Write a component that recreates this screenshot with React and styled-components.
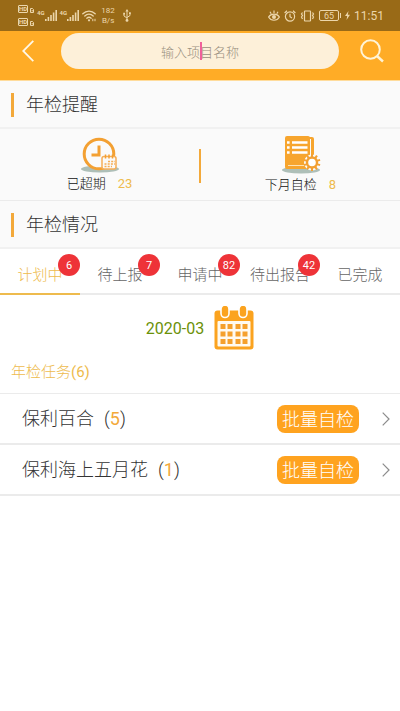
import { useState } from "react";
import styled, { createGlobalStyle, ThemeProvider } from "styled-components";

const theme = {
  colors: {
    primary: "#ffac26",
    button: "#ffa31f",
    accent: "#eebb4d",
    bar: "#f3a93a",
    status: "#996a17",
    statusText: "#ecd6ab",
    searchBg: "#fdf0d9",
    panel: "#fafafa",
    line: "#ebebeb",
    text: "#333333",
    muted: "#666666",
    badge: "#ee3338",
    date: "#6b9108",
  },
};

const GlobalStyle = createGlobalStyle`
  * {
    box-sizing: border-box;
  }
  body {
    margin: 0;
    background: #ffffff;
    font-family: Roboto, "Noto Sans CJK SC", sans-serif;
    font-weight: 300;
  }
  button, input {
    font-family: inherit;
    font-weight: inherit;
  }
  button {
    border: 0;
    padding: 0;
    background: none;
    cursor: pointer;
  }
  svg {
    display: block;
    flex: none;
  }
`;

const StatusBar = styled.div`
  display: flex;
  align-items: center;
  justify-content: space-between;
  height: 31px;
  padding: 0 16px 0 18px;
  background-color: ${({ theme }) => theme.colors.status};
  color: ${({ theme }) => theme.colors.statusText};
  font-weight: 400;
`;

const StatusGroup = styled.div`
  display: flex;
  align-items: center;
  gap: ${({ $gap }) => $gap};
`;

const HdStack = styled.div`
  display: flex;
  flex-direction: column;
  gap: 5px;
`;

const HdRow = styled.div`
  display: flex;
  align-items: flex-end;
  gap: 2px;
`;

const HdLabel = styled.span`
  width: 10px;
  height: 8px;
  border: 1px solid currentColor;
  border-radius: 1px;
  font-size: 6px;
  line-height: 6px;
  font-weight: 700;
  text-align: center;
`;

const Signal = styled.div`
  display: flex;
  align-items: flex-start;
  font-size: 6px;
  line-height: 6px;
  font-weight: 700;
`;

const NetSpeed = styled.div`
  width: 16px;
  margin: 0 4px 0 1px;
  font-size: 8px;
  line-height: 10px;
  text-align: center;
`;

const Battery = styled.div`
  display: flex;
  align-items: center;
  gap: 1px;
`;

const BatteryCell = styled.span`
  width: 20px;
  height: 11px;
  border: 1px solid currentColor;
  border-radius: 2px;
  font-size: 9px;
  line-height: 10px;
  text-align: center;
`;

const BatteryTip = styled.span`
  width: 1px;
  height: 5px;
  background-color: currentColor;
`;

const Clock = styled.span`
  font-size: 12px;
  line-height: 16px;
`;

const Header = styled.header`
  display: flex;
  align-items: flex-start;
  height: 50px;
  padding-top: 2px;
  border-bottom: 1px solid #ffdc9c;
  background-color: ${({ theme }) => theme.colors.primary};
`;

const HeaderButton = styled.button`
  display: flex;
  flex: none;
  align-items: center;
  justify-content: flex-end;
  width: 61px;
  height: 36px;
  padding-right: ${({ $inset }) => $inset};
`;

const SearchBox = styled.div`
  position: relative;
  flex: 1;
  height: 36px;
`;

const SearchInput = styled.input`
  width: 100%;
  height: 100%;
  padding: 2px 0 0;
  border: 0;
  border-radius: 18px;
  outline: none;
  background-color: ${({ theme }) => theme.colors.searchBg};
  font-size: 13px;
  text-align: center;
  &::placeholder {
    color: #988f80;
    opacity: 1;
  }
`;

const Caret = styled.span`
  position: absolute;
  top: 9px;
  left: 50%;
  width: 2px;
  height: 18px;
  background-color: #f0609a;
`;

const SectionTitle = styled.h2`
  display: flex;
  align-items: center;
  gap: 12px;
  height: 48px;
  margin: 0;
  padding: 2px 0 0 11px;
  border-bottom: 2px solid #f1f1f1;
  background-color: ${({ theme }) => theme.colors.panel};
  color: ${({ theme }) => theme.colors.text};
  font-size: 18px;
  line-height: 24px;
  font-weight: 300;
  &::before {
    content: "";
    width: 3px;
    height: 24px;
    background-color: ${({ theme }) => theme.colors.bar};
  }
`;

const Stats = styled.div`
  display: flex;
  align-items: center;
  height: 72px;
  padding-top: 2px;
  border-bottom: 1px solid ${({ theme }) => theme.colors.line};
  background-color: ${({ theme }) => theme.colors.panel};
`;

const Stat = styled.div`
  display: flex;
  flex: 1;
  flex-direction: column;
  align-items: center;
`;

const StatLabel = styled.div`
  display: flex;
  gap: 12px;
  padding-top: 1px;
  color: #111111;
  font-size: 13px;
  line-height: 20px;
`;

const Count = styled.span`
  color: ${({ theme, $strong }) => ($strong ? theme.colors.bar : theme.colors.accent)};
  font-weight: 400;
`;

const StatDivider = styled.span`
  width: 2px;
  height: 34px;
  background-color: ${({ theme }) => theme.colors.bar};
`;

const Tabs = styled.nav`
  display: flex;
`;

const Tab = styled.button`
  position: relative;
  flex: 1;
  height: 46px;
  padding-top: 8px;
  border-bottom: 2px solid
    ${({ theme, $active }) => ($active ? theme.colors.accent : theme.colors.line)};
  color: ${({ theme, $active }) => ($active ? theme.colors.accent : theme.colors.muted)};
  font-size: 15px;
  line-height: 20px;
  white-space: nowrap;
`;

const Badge = styled.span`
  position: absolute;
  top: 5px;
  right: 0;
  width: 22px;
  height: 22px;
  border-radius: 50%;
  background-color: ${({ theme }) => theme.colors.badge};
  color: #ffffff;
  font-size: 11px;
  line-height: 23px;
  font-weight: 400;
`;

const DateButton = styled.button`
  display: flex;
  align-items: center;
  justify-content: center;
  gap: 10px;
  width: 100%;
  height: 66px;
  color: ${({ theme }) => theme.colors.date};
  font-size: 16px;
  font-weight: 400;
`;

const TaskTitle = styled.h3`
  height: 33px;
  margin: 0;
  padding-left: 11px;
  border-bottom: 1px solid ${({ theme }) => theme.colors.line};
  color: ${({ theme }) => theme.colors.accent};
  font-size: 15px;
  line-height: 22px;
  font-weight: 300;
`;

const TaskList = styled.ul`
  margin: 0;
  padding: 0;
  list-style: none;
`;

const TaskRow = styled.li`
  display: flex;
  align-items: center;
  height: 51px;
  padding: 0 10px 0 22px;
  border-bottom: 2px solid ${({ theme }) => theme.colors.line};
`;

const TaskName = styled.span`
  display: flex;
  flex: 1;
  gap: 10px;
  color: ${({ theme }) => theme.colors.text};
  font-size: 18px;
  line-height: 24px;
`;

const BatchButton = styled.button`
  width: 82px;
  height: 28px;
  margin-right: 23px;
  padding-top: 2px;
  border-radius: 8px;
  background-color: ${({ theme }) => theme.colors.button};
  color: #ffffff;
  font-size: 18px;
  line-height: 26px;
`;

const SimIcon = () => (
  <svg width="4" height="5" viewBox="0 0 4 5" fill="none" stroke="currentColor">
    <path d="M.5.5H2.5L3.5 1.5V4.5H.5ZM1.5 2.8H3" />
  </svg>
);

const SignalIcon = () => (
  <svg width="12" height="11" viewBox="0 0 12 11" fill="currentColor">
    <path d="M0 9h1.6v2H0zM2.6 7h1.6v4H2.6zM5.2 5h1.6v6H5.2zM7.8 2.5h1.6V11H7.8zM10.4 0H12v11h-1.6z" />
  </svg>
);

const WifiIcon = () => (
  <svg width="14" height="12" viewBox="0 0 14 12" fill="none" stroke="currentColor" strokeLinecap="round">
    <path d="M.8 3.8C4.3.2 9.700.2 13.2 3.8M2.8 6C5.2 3.6 8.8 3.6 11.2 6M4.8 8.2C6.2 7 7.8 7 9.2 8.2" strokeWidth="1.3" />
    <circle cx="7" cy="10.3" r="1.1" fill="currentColor" stroke="none" />
    <path d="M10.8 9.2v1.6M13 9.2v1.6" />
  </svg>
);

const UsbIcon = () => (
  <svg width="8" height="13" viewBox="0 0 8 13" fill="none" stroke="currentColor">
    <path d="M4 2V11M1 5V7L4 9M7 4.5V6.5L4 8.5" />
    <path d="M4 0L5.6 2.6H2.4ZM.2 3.8h1.8v1.8H.2zM6 3.2h1.8V5H6z" fill="currentColor" stroke="none" />
    <circle cx="4" cy="11.4" r="1.4" fill="currentColor" stroke="none" />
  </svg>
);

const EyeIcon = () => (
  <svg width="12" height="12" viewBox="0 0 12 12" fill="none" stroke="currentColor" strokeWidth="1.2">
    <path d="M.6 7C3 3.2 9 3.2 11.4 7 9 11.3 3 11.3.6 7ZM6 .5V3M2 1.8L3.2 3.7M10 1.8L8.8 3.7" />
    <circle cx="6" cy="7" r="2" fill="currentColor" stroke="none" />
  </svg>
);

const AlarmIcon = () => (
  <svg width="12" height="12" viewBox="0 0 12 12" fill="none" stroke="currentColor" strokeWidth="1.2">
    <circle cx="6" cy="6.500" r="4.6" />
    <path d="M6 3.8V6.7L8 8M.6 3L3 .8M11.4 3L9 .8" />
  </svg>
);

const VibrateIcon = () => (
  <svg width="15" height="12" viewBox="0 0 15 12" fill="none" stroke="currentColor" strokeWidth="1.2">
    <rect x="4.5" y="1" width="6" height="10" rx="0.5" />
    <path d="M2.5 2.5L1.5 4 2.5 5.5 1.5 7 2.5 9M12.5 2.5L13.5 4 12.5 5.5 13.5 7 12.5 9" />
  </svg>
);

const BoltIcon = () => (
  <svg width="5" height="9" viewBox="0 0 5 9" fill="currentColor">
    <path d="M3.5 0L0 5H2.2L1.5 9 5 3.8H2.8Z" />
  </svg>
);

const BackIcon = () => (
  <svg width="12" height="22" viewBox="0 0 12 22" fill="none" stroke="#fff8e8" strokeWidth="1.8">
    <path d="M11.3.8L1.2 11 11.3 21.2" />
  </svg>
);

const SearchIcon = () => (
  <svg width="24" height="24" viewBox="0 0 24 24" fill="none" stroke="#fff3d6" strokeWidth="2">
    <circle cx="10.5" cy="10.5" r="9.3" />
    <path d="M17 17L23 22.5" strokeWidth="2.4" />
  </svg>
);

const OverdueIcon = () => (
  <svg width="40" height="36" viewBox="0 0 40 36">
    <ellipse cx="20" cy="32" rx="19" ry="3.5" fill="#aebfb8" />
    <circle cx="19" cy="17" r="14.8" fill="#fafafa" stroke="#f3a032" strokeWidth="3" />
    <path d="M19 8.5V18H11.5" fill="none" stroke="#f3a032" strokeWidth="3" />
    <rect x="22" y="19.5" width="14" height="12.5" rx="2" fill="#fafafa" stroke="#f6ae58" strokeWidth="1.5" />
    <path d="M25.5 17.500V21.500M29 17.500V21.500M32.500 17.500V21.500" stroke="#f3a032" strokeWidth="1.5" />
    <path d="M28 24.500H35M24.500 27H35M24.500 29.500H32" stroke="#f5ad55" strokeWidth="1.5" strokeDasharray="2 1.2" />
  </svg>
);

const teeth = [0, 36, 72, 108, 144, 180, 216, 252, 288, 324];

const SelfCheckIcon = () => (
  <svg width="40" height="38" viewBox="0 0 40 38">
    <ellipse cx="20" cy="34" rx="19" ry="3.5" fill="#aebfb8" />
    <path d="M26 1H31Q33 1 33 3V33H26Z" fill="#f7a52e" />
    <path d="M29.5 3V33" stroke="#fafafa" />
    <rect x="4" y="0" width="25" height="33" rx="2" fill="#f7a52e" />
    <path d="M11 6.5H26.5M11 11.5H26.5M11 16.5H26.5" stroke="#ffffff" strokeWidth="2.6" />
    <path d="M6 6.5H8.6M6 11.5H8.6M6 16.5H8.6" stroke="#ffffff" strokeWidth="2.6" />
    <path d="M7 29.5H26" stroke="#ffe2b3" />
    <circle cx="31" cy="26.5" r="8" fill="#fafafa" />
    {teeth.map((angle) => (
      <rect key={angle} x="30" y="18" width="2" height="4" fill="#f3a032" transform={`rotate(${angle} 31 26.5)`} />
    ))}
    <circle cx="31" cy="26.5" r="5" fill="#ffffff" stroke="#f3a032" strokeWidth="2.4" />
  </svg>
);

const columns = [6.5, 13.5, 21.5, 28.5];
const rows = [18, 25.5, 33];

const CalendarIcon = () => (
  <svg width="40" height="44" viewBox="0 0 40 44">
    <rect x="0.5" y="4.5" width="39" height="39" rx="3" fill="#fba31f" />
    <rect x="3.5" y="15" width="33" height="25.5" rx="1" fill="#fffaf0" />
    {[11, 29].map((x) => (
      <rect key={x} x={x - 4} y="-1" width="8" height="12.5" rx="4" fill="#fba31f" stroke="#ffffff" strokeWidth="1.6" />
    ))}
    {rows.map((y) =>
      columns.map((x) => <rect key={`${x}-${y}`} x={x} y={y} width="5" height="5" fill="#f5a02c" />)
    )}
  </svg>
);

const ArrowIcon = () => (
  <svg width="8" height="14" viewBox="0 0 8 14" fill="none" stroke="#8c8c8c" strokeWidth="1.2">
    <path d="M.7.7L7 7 .7 13.3" />
  </svg>
);

const tabs = [
  { label: "计划中", count: 6 },
  { label: "待上报", count: 7 },
  { label: "申请中", count: 82 },
  { label: "待出报告", count: 42 },
  { label: "已完成" },
];

const tasks = [
  { name: "保利百合", count: 5 },
  { name: "保利海上五月花", count: 1 },
];

const App = () => {
  const [active, setActive] = useState(0);

  return (
    <ThemeProvider theme={theme}>
      <GlobalStyle />
      <StatusBar>
        <StatusGroup $gap="3px">
          <HdStack>
            <HdRow><HdLabel>HD</HdLabel><SimIcon /></HdRow>
            <HdRow><HdLabel>HD</HdLabel><SimIcon /></HdRow>
          </HdStack>
          <Signal>4G<SignalIcon /></Signal>
          <Signal>4G<SignalIcon /></Signal>
          <WifiIcon />
          <NetSpeed>182 B/s</NetSpeed>
          <UsbIcon />
        </StatusGroup>
        <StatusGroup $gap="4px">
          <EyeIcon />
          <AlarmIcon />
          <VibrateIcon />
          <Battery>
            <BatteryCell>65</BatteryCell>
            <BatteryTip />
          </Battery>
          <BoltIcon />
          <Clock>11:51</Clock>
        </StatusGroup>
      </StatusBar>
      <Header>
        <HeaderButton $inset="27px" aria-label="返回"><BackIcon /></HeaderButton>
        <SearchBox>
          <SearchInput type="text" placeholder="输入项目名称" aria-label="输入项目名称" />
          <Caret />
        </SearchBox>
        <HeaderButton $inset="16px" aria-label="搜索"><SearchIcon /></HeaderButton>
      </Header>
      <main>
        <SectionTitle>年检提醒</SectionTitle>
        <Stats>
          <Stat>
            <OverdueIcon />
            <StatLabel>已超期<Count>23</Count></StatLabel>
          </Stat>
          <StatDivider />
          <Stat>
            <SelfCheckIcon />
            <StatLabel>下月自检<Count>8</Count></StatLabel>
          </Stat>
        </Stats>
        <SectionTitle>年检情况</SectionTitle>
        <Tabs>
          {tabs.map(({ label, count }, index) => (
            <Tab key={label} $active={index === active} onClick={() => setActive(index)}>
              {label}
              {count && <Badge>{count}</Badge>}
            </Tab>
          ))}
        </Tabs>
        <DateButton>
          2020-03
          <CalendarIcon />
        </DateButton>
        <TaskTitle>年检任务<Count>(6)</Count></TaskTitle>
        <TaskList>
          {tasks.map(({ name, count }) => (
            <TaskRow key={name}>
              <TaskName>
                {name}
                <span>(<Count $strong>{count}</Count>)</span>
              </TaskName>
              <BatchButton>批量自检</BatchButton>
              <ArrowIcon />
            </TaskRow>
          ))}
        </TaskList>
      </main>
    </ThemeProvider>
  );
};

export default App;
